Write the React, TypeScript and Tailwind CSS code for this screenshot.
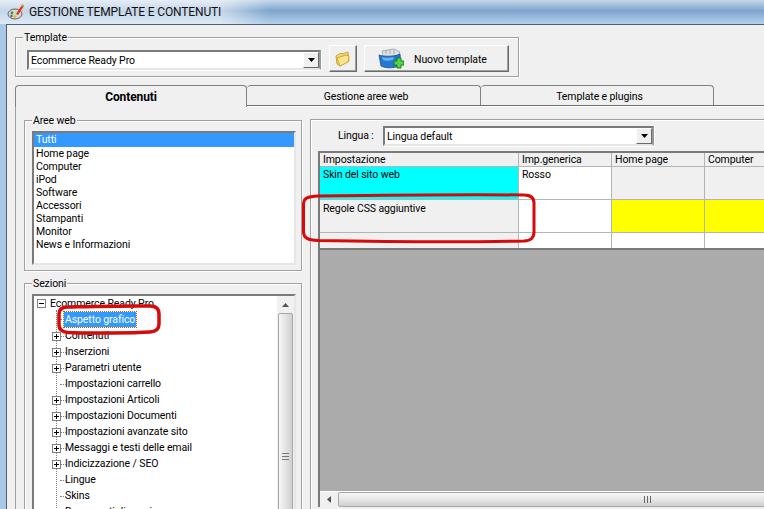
const font = "font-['Roboto',Arial,sans-serif] text-[10.5px] tracking-[-0.1px] text-black"

const areeWeb = ['Home page', 'Computer', 'iPod', 'Software', 'Accessori', 'Stampanti', 'Monitor', 'News e Informazioni']

const sezioni = [
  { label: 'Aspetto grafico', selected: true },
  { label: 'Contenuti', plus: true },
  { label: 'Inserzioni', plus: true },
  { label: 'Parametri utente', plus: true },
  { label: 'Impostazioni carrello' },
  { label: 'Impostazioni Articoli', plus: true },
  { label: 'Impostazioni Documenti', plus: true },
  { label: 'Impostazioni avanzate sito', plus: true },
  { label: 'Messaggi e testi delle email', plus: true },
  { label: 'Indicizzazione / SEO', plus: true },
  { label: 'Lingue' },
  { label: 'Skins' },
  { label: 'Documenti di sessione' },
]

function Combo({ text, width }: { text: string; width: string }) {
  return (
    <div className={`${width} h-[20px] flex items-center bg-white border-2 border-t-[#7a7a7a] border-l-[#7a7a7a] border-r-[#9a9a9a] border-b-[#e6e6e6] shadow-[1px_1px_0_#fff]`}>
      <span className="flex-1 pl-[2px] pt-[1px] leading-[14px] truncate">{text}</span>
      <div className="w-[16px] h-[16px] flex items-center justify-center bg-[#f0f0f0] border border-t-white border-l-white border-r-[#696969] border-b-[#696969]">
        <svg width="7" height="4" viewBox="0 0 7 4"><path d="M0 0h7L3.5 4z" fill="#000" /></svg>
      </div>
    </div>
  )
}

function RaisedButton({ className, children }: { className: string; children: React.ReactNode }) {
  return (
    <div className={`${className} h-[27px] flex items-center bg-[#f0f0f0] border border-t-white border-l-white border-r-[#696969] border-b-[#696969] shadow-[inset_-1px_-1px_0_#a0a0a0]`}>
      {children}
    </div>
  )
}

function Group({ title, className, children }: { title: string; className: string; children: React.ReactNode }) {
  return (
    <fieldset className={`${className} shrink-0 border border-[#a0a0a0] shadow-[1px_1px_0_#fff,inset_1px_1px_0_#fff]`}>
      <legend className="ml-[7px] px-[1px] leading-[13px] h-[13px]">{title}</legend>
      {children}
    </fieldset>
  )
}

function FolderIcon() {
  return (
    <svg width="16" height="16" viewBox="0 0 16 16">
      <path d="M1 5l5-3 1 1 6-2 1 9-9 5-3-2z" fill="#f5d76a" stroke="#b8942a" strokeWidth="0.8" />
      <path d="M2 7l9-3 3 1-1 6-8 4z" fill="#fbe58d" stroke="#c29a2c" strokeWidth="0.8" />
    </svg>
  )
}

function TemplateIcon() {
  return (
    <svg width="26" height="24" viewBox="0 0 26 24">
      <path d="M4 4l12-2 6 3-2 4H5z" fill="#dfe3e6" stroke="#9aa0a6" strokeWidth="0.8" />
      <path d="M8 3v4M12 3v4M16 3v4" stroke="#aab0b6" strokeWidth="1.2" />
      <path d="M1 8c5 2 15 2 21-1l1 11c-5 3-14 4-20 1z" fill="#2378d0" stroke="#14508f" strokeWidth="0.8" />
      <path d="M4 10c3 1 8 1 12 0l-1 3c-4 1-8 1-10 0z" fill="#6bb2ee" />
      <path d="M16 14h3v-3h4v3h3v4h-3v3h-4v-3h-3z" fill="#58d24a" stroke="#14801c" strokeWidth="1" />
    </svg>
  )
}

function AppIcon() {
  return (
    <svg width="18" height="16" viewBox="0 0 18 16">
      <ellipse cx="8" cy="10" rx="7" ry="5" fill="#d8d8c8" stroke="#666" strokeWidth="1" />
      <circle cx="5" cy="9" r="1.4" fill="#3a9a3a" />
      <circle cx="8" cy="12.5" r="1.3" fill="#e6b820" />
      <circle cx="4.5" cy="12" r="1.2" fill="#3a6ac8" />
      <path d="M9 10l6-9 2 1-6 9z" fill="#d8341c" />
      <path d="M14 1l2-1 1 2-2 1z" fill="#e8a020" />
    </svg>
  )
}

function Expander({ minus }: { minus?: boolean }) {
  return (
    <svg width="9" height="9" viewBox="0 0 9 9" className="shrink-0">
      <rect x="0.5" y="0.5" width="8" height="8" fill="#fff" stroke="#808080" />
      <path d={minus ? 'M2 4.5h5' : 'M2 4.5h5M4.5 2v5'} stroke="#000" />
    </svg>
  )
}

function Tab({ text, className, active }: { text: string; className: string; active?: boolean }) {
  return (
    <div className={`${className} flex items-center justify-center rounded-t-[4px] border-t border-r border-[#808080] bg-[#f0f0f0] ${active ? 'h-[22px] font-bold text-[12px] border-l z-10' : 'h-[21px] pl-[5px] pt-[2px] border-b border-b-[#6e6e6e] shadow-[0_1px_0_#fff]'}`}>
      {text}
    </div>
  )
}

function Cell({ className, children }: { className: string; children?: React.ReactNode }) {
  return <div className={`${className} shrink-0 h-full pl-[3px] leading-[14px] border-r border-[#b4b4b4]`}>{children}</div>
}

export default function App() {
  return (
    <div className={`${font} relative w-[764px] h-[509px] overflow-hidden flex flex-col bg-[#a9c8e6]`}>
      {/* Barra del titolo */}
      <div className="h-[24px] shrink-0 flex items-center pl-[7px] gap-[4px] bg-[linear-gradient(90deg,rgba(255,255,255,0.55)_0,rgba(255,255,255,0.55)_220px,rgba(255,255,255,0)_270px),linear-gradient(180deg,#c6d8ea_0%,#7ea4cc_45%,#b4d0ec_100%)]">
        <AppIcon />
        <span className="text-[12px] tracking-[-0.15px] text-[#111]">GESTIONE TEMPLATE E CONTENUTI</span>
      </div>

      <div className="flex-1 min-h-0 ml-[6px] border-l border-t border-[#51606e] bg-[#f0f0f0] pl-[8px] flex flex-col">
        {/* Template */}
        <Group title="Template" className="w-[504px] h-[46px] mt-[6px]">
          <div className="flex items-start gap-[8px] mt-[1px] pl-[11px]">
            <Combo text="Ecommerce Ready Pro" width="w-[294px] mt-[5px]" />
            <RaisedButton className="w-[28px] justify-center"><FolderIcon /></RaisedButton>
            <RaisedButton className="w-[145px] ml-[-1px] pl-[13px] gap-[10px]">
              <TemplateIcon />
              <span className="pt-[3px]">Nuovo template</span>
            </RaisedButton>
          </div>
        </Group>

        {/* Linguette */}
        <div className="flex items-start mt-[8px] shrink-0 w-[749px]">
          <Tab text="Contenuti" className="w-[232px]" active />
          <Tab text="Gestione aree web" className="w-[234px]" />
          <Tab text="Template e plugins" className="w-[233px]" />
          <div className="flex-1 h-[21px] border-b border-b-[#6e6e6e] shadow-[0_1px_0_#fff]" />
        </div>

        <div className="flex-1 min-h-0 border-l border-[#a0a0a0] pl-[8px] flex gap-[8px]">
          {/* Colonna sinistra */}
          <div className="w-[278px] shrink-0 flex flex-col gap-[6px] pt-[7px]">
            <Group title="Aree web" className="h-[157px]">
              <div className="h-[134px] mt-[4px] ml-[7px] mr-[5px] border-2 border-t-[#7a7a7a] border-l-[#7a7a7a] border-r-[#e6e6e6] border-b-[#e6e6e6] bg-white">
                <div className="h-[14px] leading-[14px] pl-[2px] bg-[#3399ff] text-white">Tutti</div>
                {areeWeb.map((a) => (
                  <div key={a} className="h-[13px] leading-[13px] pl-[2px]">{a}</div>
                ))}
              </div>
            </Group>

            <Group title="Sezioni" className="h-[240px]">
              <div className="relative h-[240px] mt-[4px] ml-[7px] mr-[5px] border-2 border-[#7a7a7a] border-r-[#e6e6e6] border-b-0 bg-white flex overflow-hidden">
                <div className="flex-1 pl-[3px] flex flex-col relative">
                  <div className="h-[15px] shrink-0 flex items-center gap-[4px]">
                    <Expander minus />
                    <span>Ecommerce Ready Pro</span>
                  </div>
                  <div className="absolute left-[22px] top-[14px] h-[230px] border-l border-dotted border-[#808080]" />
                  {sezioni.map((s) => (
                    <div key={s.label} className={`${s.selected ? 'h-[17px]' : 'h-[16px]'} shrink-0 flex items-center pl-[15px] relative`}>
                      <div className="w-[13px] flex items-center justify-start relative">
                        {s.plus && <Expander />}
                      </div>
                      <div className="absolute left-[23px] w-[6px] border-t border-dotted border-[#808080] top-[8px]" />
                      <span className={s.selected ? 'bg-[#3399ff] text-white px-[1px] -ml-[1px] outline-1 outline-dotted outline-[#b06000] leading-[15px]' : 'leading-[14px]'}>{s.label}</span>
                    </div>
                  ))}
                </div>
                {/* Barra di scorrimento */}
                <div className="w-[17px] shrink-0 bg-[#f0f0f0] flex flex-col items-center">
                  <div className="h-[17px] flex items-center justify-center">
                    <svg width="7" height="4" viewBox="0 0 7 4"><path d="M3.5 0L7 4H0z" fill="#555" /></svg>
                  </div>
                  <div className="flex-1 w-[15px] rounded-[2px] border border-[#a8a8a8] bg-[linear-gradient(90deg,#f6f6f6,#e4e4e4_50%,#cfcfcf)] flex justify-center pt-[139px]">
                    <div className="w-[7px] h-[7px] border-y border-[#777] bg-[linear-gradient(180deg,transparent_2px,#777_2px,#777_3px,transparent_3px)]" />
                  </div>
                </div>
              </div>
            </Group>
          </div>

          {/* Colonna destra */}
          <div className="flex-1 min-w-0 pt-[12px]">
            <fieldset className="h-[400px] border-l border-t border-[#a0a0a0] shadow-[inset_1px_1px_0_#fff] pl-[7px] flex flex-col">
              <div className="flex items-center h-[20px] mt-[6px] shrink-0">
                <span className="ml-[20px] w-[45px]">Lingua :</span>
                <Combo text="Lingua default" width="w-[271px]" />
              </div>
              <div className="mt-[5px] h-[356px] border-2 border-[#7a7a7a] border-r-0 border-b-0 bg-[#ababab] flex flex-col overflow-hidden">
                <div className="h-[14px] shrink-0 flex bg-[#f0f0f0] border-b border-[#b4b4b4]">
                  <Cell className="w-[199px]">Impostazione</Cell>
                  <Cell className="w-[93px]">Imp.generica</Cell>
                  <Cell className="w-[93px]">Home page</Cell>
                  <Cell className="w-[93px]">Computer</Cell>
                </div>
                <div className="h-[33px] shrink-0 flex bg-white border-b border-[#b4b4b4]">
                  <Cell className="w-[199px] pt-[1px] bg-[#00ffff]">Skin del sito web</Cell>
                  <Cell className="w-[93px] pt-[1px]">Rosso</Cell>
                  <Cell className="w-[93px] bg-[#f0f0f0]" />
                  <Cell className="w-[93px] bg-[#f0f0f0]" />
                </div>
                <div className="h-[33px] shrink-0 flex bg-white border-b border-[#b4b4b4]">
                  <Cell className="w-[199px] pt-[2px] bg-[#f0f0f0]">Regole CSS aggiuntive</Cell>
                  <Cell className="w-[93px]" />
                  <Cell className="w-[93px] bg-[#ffff00]" />
                  <Cell className="w-[93px] bg-[#ffff00]" />
                </div>
                <div className="h-[17px] shrink-0 flex bg-white border-b-2 border-[#7a7a7a]">
                  <Cell className="w-[199px] bg-[#f0f0f0]" />
                  <Cell className="w-[93px]" />
                  <Cell className="w-[93px]" />
                  <Cell className="w-[93px]" />
                </div>
                <div className="flex-1" />
                <div className="h-[16px] shrink-0 flex items-stretch bg-[#f0f0f0] border-t border-white">
                  <div className="w-[18px] flex items-center justify-center">
                    <svg width="4" height="7" viewBox="0 0 4 7"><path d="M4 0v7L0 3.500z" fill="#555" /></svg>
                  </div>
                  <div className="flex-1 rounded-[2px] border border-[#a8a8a8] bg-[linear-gradient(180deg,#f6f6f6,#e8e8e8_45%,#cfcfcf)] flex items-center pl-[305px]">
                    <div className="w-[7px] h-[7px] border-x border-[#666] bg-[linear-gradient(90deg,transparent_2px,#666_2px,#666_3px,transparent_3px)]" />
                  </div>
                </div>
              </div>
            </fieldset>
          </div>
        </div>
      </div>

      {/* Annotazioni rosse */}
      <svg className="absolute inset-0 pointer-events-none" width="764" height="509" viewBox="0 0 764 509" fill="none">
        <path d="M68 307C62 307 59 309 59 314L59 325C59 330 62 332 68 332.500C90 333.500 135 333 150 332C156 331.500 159 329 159 324L159 314C159 309 156 306 150 306C125 305.500 90 306.500 68 307Z" stroke="#d60a0a" strokeWidth="3.5" />
        <path d="M524 195C480 194.500 400 195 318 196C308 196.500 303.500 198 303.500 204L303.500 232C303.500 238 308 240 318 240.500C400 242 480 242 524 241C531 240.500 534 238 534 232L534 203C534 198 531 195 524 195Z" stroke="#d60a0a" strokeWidth="3" />
      </svg>
    </div>
  )
}
